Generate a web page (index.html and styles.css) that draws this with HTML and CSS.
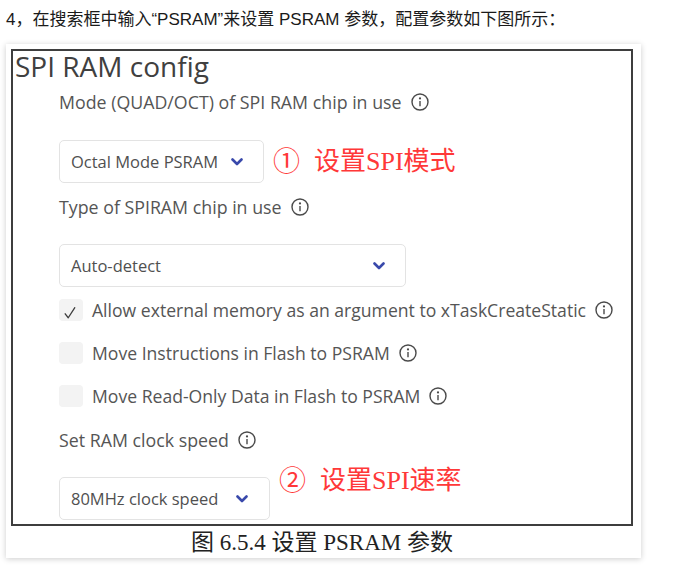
FILE: index.html
```html
<!DOCTYPE html>
<html lang="zh-CN">
<head>
<meta charset="utf-8">
<title>SPI RAM config</title>
<link rel="stylesheet" href="styles.css">
</head>
<body>
<p class="intro">4，在搜索框中输入“PSRAM”来设置 PSRAM 参数，配置参数如下图所示：</p>
<div class="card">
  <div class="frame">
    <h1 class="title">SPI RAM config</h1>
    <div class="settings">
      <div class="label label-mode">Mode (QUAD/OCT) of SPI RAM chip in use
        <svg class="info" viewBox="0 0 18 18"><circle cx="9" cy="9" r="8"/><circle class="dot" cx="9" cy="5.4" r="1.1"/><line x1="9" y1="8" x2="9" y2="13.2"/></svg>
      </div>
      <div class="select-row row-mode">
        <div class="select select-mode"><span>Octal Mode PSRAM</span>
          <svg class="chev" viewBox="0 0 12 8"><polyline points="1.5,1.5 6,6 10.5,1.5"/></svg>
        </div>
        <span class="note"><span class="num">①</span>设置SPI模式</span>
      </div>
      <div class="label label-type">Type of SPIRAM chip in use
        <svg class="info" viewBox="0 0 18 18"><circle cx="9" cy="9" r="8"/><circle class="dot" cx="9" cy="5.4" r="1.1"/><line x1="9" y1="8" x2="9" y2="13.2"/></svg>
      </div>
      <div class="select-row row-type">
        <div class="select select-type"><span>Auto-detect</span>
          <svg class="chev" viewBox="0 0 12 8"><polyline points="1.5,1.5 6,6 10.5,1.5"/></svg>
        </div>
      </div>
      <div class="check-row check-first">
        <span class="box"><svg class="tick" viewBox="0 0 16 16"><polyline points="2.5,9.5 6,14 13.5,2.5"/></svg></span>
        <span class="check-text">Allow external memory as an argument to xTaskCreateStatic</span>
        <svg class="info" viewBox="0 0 18 18"><circle cx="9" cy="9" r="8"/><circle class="dot" cx="9" cy="5.4" r="1.1"/><line x1="9" y1="8" x2="9" y2="13.2"/></svg>
      </div>
      <div class="check-row">
        <span class="box"></span>
        <span class="check-text">Move Instructions in Flash to PSRAM</span>
        <svg class="info" viewBox="0 0 18 18"><circle cx="9" cy="9" r="8"/><circle class="dot" cx="9" cy="5.4" r="1.1"/><line x1="9" y1="8" x2="9" y2="13.2"/></svg>
      </div>
      <div class="check-row">
        <span class="box"></span>
        <span class="check-text">Move Read-Only Data in Flash to PSRAM</span>
        <svg class="info" viewBox="0 0 18 18"><circle cx="9" cy="9" r="8"/><circle class="dot" cx="9" cy="5.4" r="1.1"/><line x1="9" y1="8" x2="9" y2="13.2"/></svg>
      </div>
      <div class="label label-clock">Set RAM clock speed
        <svg class="info" viewBox="0 0 18 18"><circle cx="9" cy="9" r="8"/><circle class="dot" cx="9" cy="5.4" r="1.1"/><line x1="9" y1="8" x2="9" y2="13.2"/></svg>
      </div>
      <div class="select-row row-clock">
        <div class="select select-clock"><span>80MHz clock speed</span>
          <svg class="chev" viewBox="0 0 12 8"><polyline points="1.5,1.5 6,6 10.5,1.5"/></svg>
        </div>
        <span class="note note-raised"><span class="num">②</span>设置SPI速率</span>
      </div>
    </div>
  </div>
  <p class="caption">图 6.5.4 设置 PSRAM 参数</p>
</div>
</body>
</html>
```

FILE: styles.css
```css
html, body {
  margin: 0;
  padding: 0;
  background: #ffffff;
}

body {
  width: 699px;
  height: 565px;
  overflow: hidden;
}

.intro {
  margin: 0;
  padding: 9px 0 0 6px;
  height: 35px;
  box-sizing: border-box;
  font-family: "Liberation Sans", "Noto Sans CJK SC", sans-serif;
  font-size: 17px;
  line-height: 22px;
  color: #1a1a1a;
  white-space: nowrap;
}

.card {
  margin: 9px 0 0 6px;
  width: 635px;
  height: 514px;
  box-sizing: border-box;
  padding: 5px 8px 0 5px;
  background: #ffffff;
  box-shadow: 0 1px 6px rgba(0, 0, 0, 0.2);
}

.frame {
  border: 2px solid #3e3e3e;
  height: 477px;
  box-sizing: border-box;
  padding: 0 0 4px 0;
  font-family: "Open Sans", "Noto Sans", sans-serif;
  color: #555555;
}

.title {
  margin: 0;
  padding-left: 2px;
  font-family: "Open Sans", sans-serif;
  font-weight: 400;
  font-size: 28px;
  line-height: 30px;
  color: #404040;
}

.settings {
  display: flex;
  flex-direction: column;
  padding-left: 46px;
}

.label {
  display: flex;
  align-items: center;
  gap: 9px;
  height: 24px;
  font-size: 17.8px;
  white-space: nowrap;
}

.label-mode { margin-top: 9px; }
.label-type { margin-top: 12px; }
.label-clock { margin-top: 20px; }

.info {
  width: 18px;
  height: 18px;
  flex: none;
  fill: none;
  stroke: #4a4a4a;
  stroke-width: 1.4;
}

.info .dot {
  fill: #4a4a4a;
  stroke: none;
}

.select-row {
  display: flex;
  align-items: center;
  gap: 9px;
}

.row-mode { margin-top: 26px; }
.row-type { margin-top: 25px; }
.row-clock { margin-top: 25px; }

.select {
  height: 43px;
  box-sizing: border-box;
  border: 1px solid #e3e3e3;
  border-radius: 5px;
  display: flex;
  align-items: center;
  justify-content: space-between;
  padding: 0 20px 0 11px;
  font-size: 16.5px;
  color: #505050;
  white-space: nowrap;
  background: #ffffff;
}

.select-mode { width: 205px; }
.select-type { width: 347px; }
.select-clock { width: 211px; padding-right: 21px; }

.chev {
  width: 12px;
  height: 8px;
  fill: none;
  stroke: #3949ab;
  stroke-width: 2.6;
  stroke-linecap: round;
  stroke-linejoin: round;
}

.note {
  display: flex;
  align-items: center;
  font-family: "Liberation Serif", "Noto Sans CJK SC", serif;
  font-size: 26px;
  line-height: 30px;
  color: #ff3838;
  white-space: nowrap;
}

.num {
  font-family: "DejaVu Sans", sans-serif;
  font-size: 27px;
  font-weight: 300;
  margin-right: 14px;
}

.note-raised {
  margin-top: -36px;
}

.check-row {
  display: flex;
  align-items: center;
  height: 24px;
  font-size: 17.6px;
  white-space: nowrap;
  margin-top: 19px;
}

.check-first { margin-top: 11px; }

.box {
  width: 24px;
  height: 22px;
  flex: none;
  border-radius: 4px;
  background: #f3f3f3;
  margin-right: 9px;
  display: flex;
  align-items: flex-end;
  justify-content: center;
}

.tick {
  width: 14px;
  height: 17px;
  fill: none;
  stroke: #3c3c3c;
  stroke-width: 1.5;
  stroke-linecap: round;
  stroke-linejoin: round;
  margin: 0 2px 0 0;
}

.check-text {
  margin-right: 9px;
}

.caption {
  margin: 3px 0 0 0;
  text-align: center;
  font-family: "Liberation Serif", "Noto Sans CJK SC", serif;
  font-size: 23px;
  line-height: 28px;
  color: #222222;
}
```
